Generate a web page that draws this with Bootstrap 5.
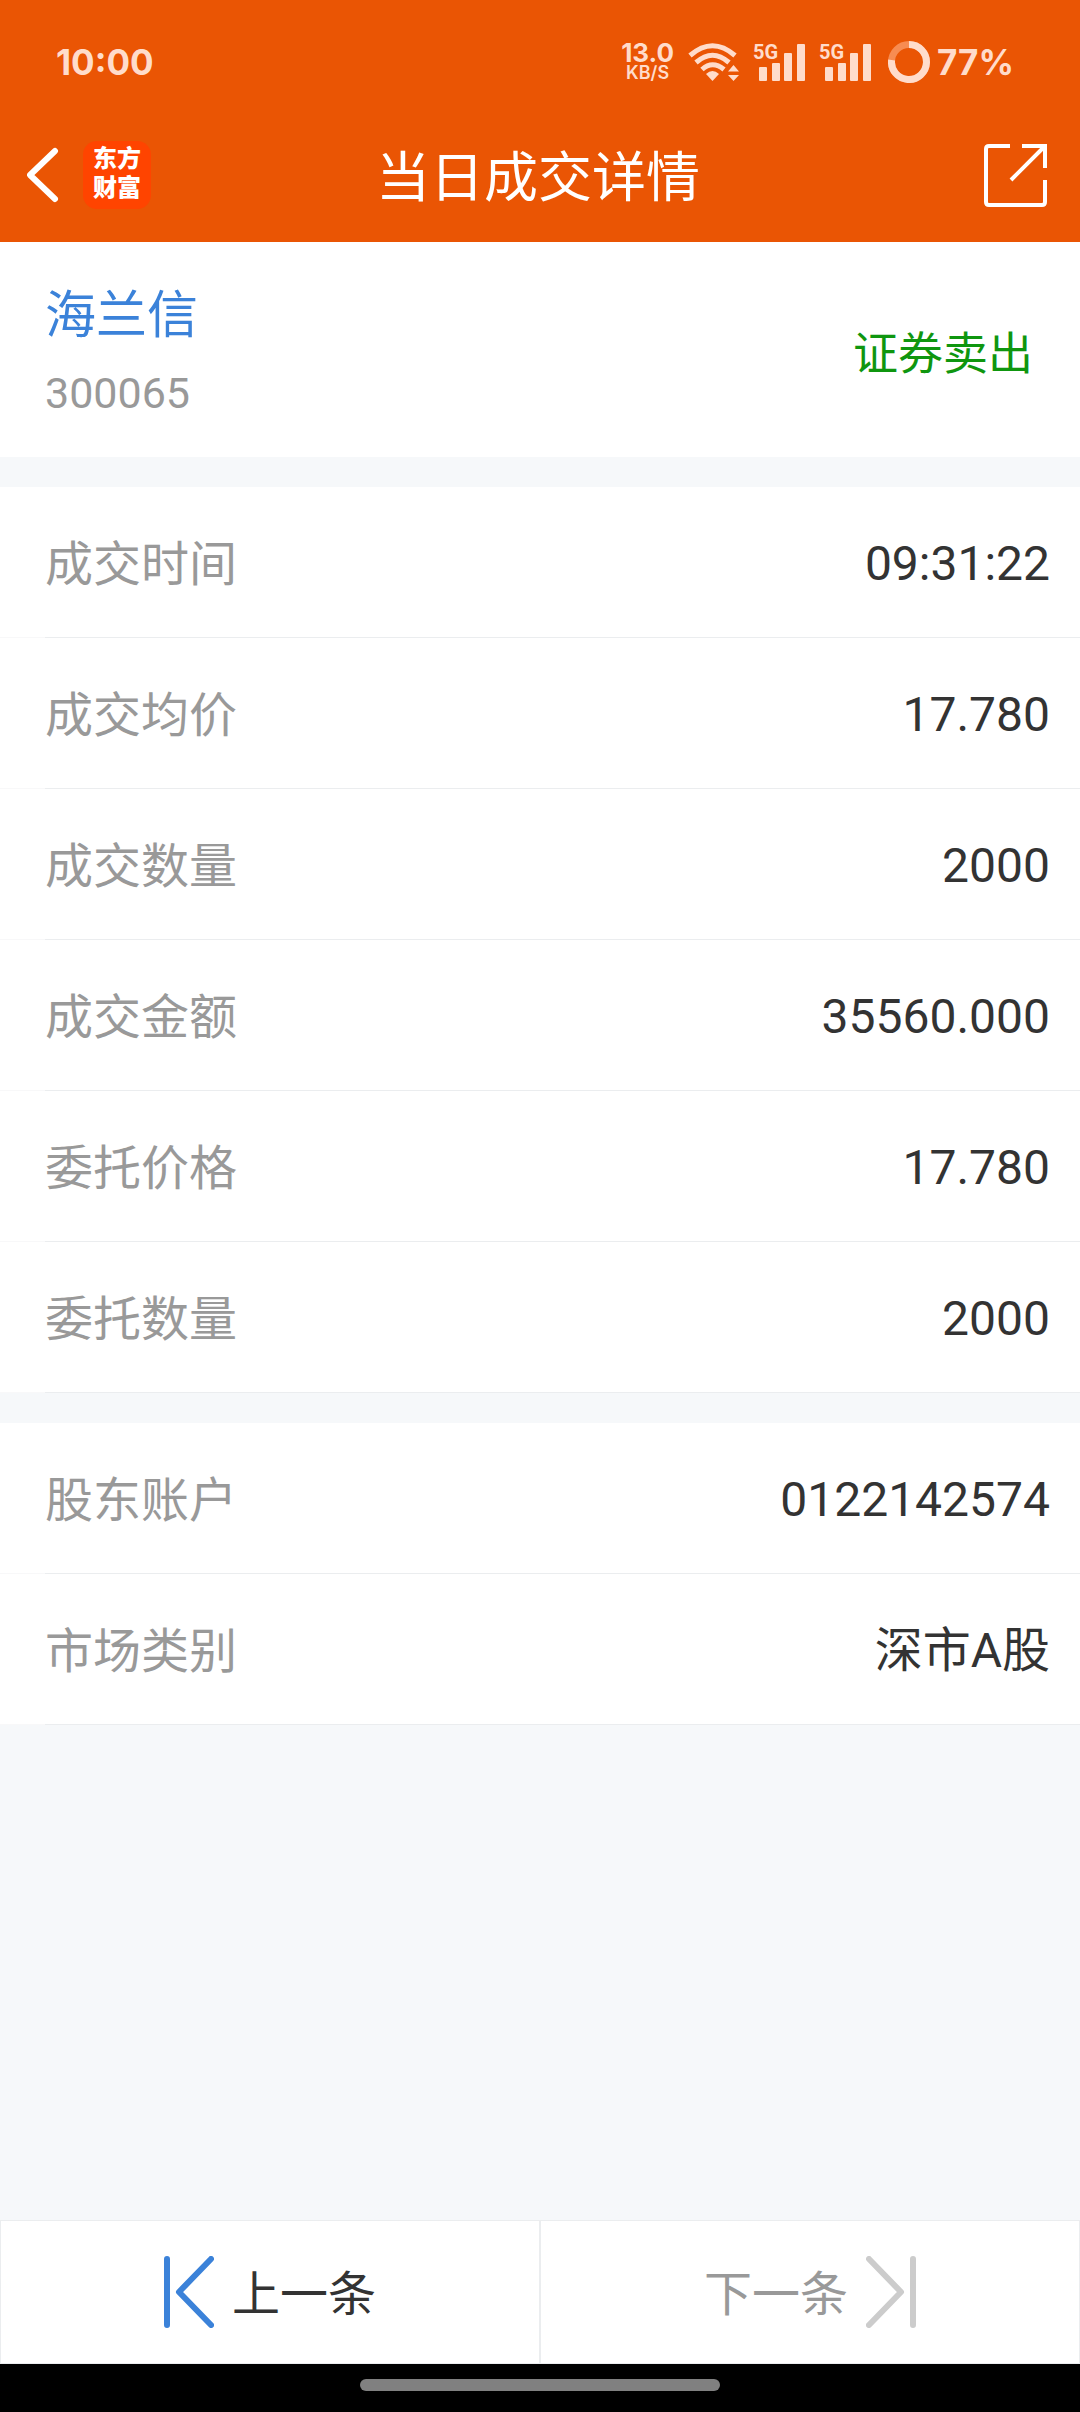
<!DOCTYPE html>
<html lang="zh-CN">
<head>
<meta charset="utf-8">
<meta name="viewport" content="width=device-width, initial-scale=1">
<title>当日成交详情</title>
<link href="https://cdn.jsdelivr.net/npm/bootstrap@5.3.0/dist/css/bootstrap.min.css" rel="stylesheet">
<style>
  body { background: #f6f8fa; color: #333; font-family: Roboto, "Noto Sans CJK SC", sans-serif; font-size: 48px; line-height: 72px; }
  svg { display: block; flex: none; }
  .top-area { background: #ea5504; color: #fff; }
  .status-bar { height: 124px; padding: 0 66px 0 56px; color: #ffdccb; font-family: Inter, sans-serif; font-weight: 700; font-size: 35px; line-height: 40px; }
  .net-speed { font-size: 26px; line-height: 22px; margin-right: 14px; }
  .net-unit { font-size: 18px; line-height: 18px; font-weight: 600; }
  .wifi { margin-right: 14px; }
  .signal { position: relative; width: 53px; height: 38px; margin-right: 13px; }
  .signal-name { position: absolute; left: 0; top: 0; font-size: 20px; line-height: 18px; font-family: Roboto, sans-serif; }
  .battery { margin: 0 7px 0 3px; }
  .title-bar { display: grid; grid-template-columns: 1fr auto 1fr; height: 118px; padding: 0 33px 16px 27px; }
  .title-bar h1 { font-size: 54px; line-height: 72px; padding: 8px 0 0 2px; }
  .app-logo { width: 68px; height: 68px; border-radius: 14px; background: #ff4400; color: #fff; font-size: 24px; line-height: 29px; font-weight: 900; margin-left: 24px; padding-bottom: 2px; }
  .stock-head { padding: 40px 47px 30px 45px; height: 215px; }
  .stock-name { color: #3b82d9; font-size: 51px; line-height: 76px; }
  .stock-code { color: #999; font-size: 43px; line-height: 78px; }
  .trade-side { color: #0f960f; font-size: 45px; line-height: 68px; }
  .detail-line { height: 151px; padding: 0 30px 0 45px; background: linear-gradient(#ebedef, #ebedef) 45px 100% / 100% 1px no-repeat, linear-gradient(#f8f8f9, #f8f8f9) 0 100% / 100% 1px no-repeat #fff; }
  .detail-line dt { color: #999; padding-top: 5px; }
  .detail-line dd { padding-top: 3px; }
  .section-gap { margin-top: 30px; }
  .pager-btn { height: 144px; gap: 18px; background: #fff; border: 1px solid #ebedef; color: #333; font-size: 48px; line-height: 72px; }
  .pager-btn span { padding-top: 6px; }
  .pager-btn:disabled { color: #999; }
  .home-strip { background: #000; height: 48px; padding-top: 15px; }
  .home-pill { width: 33.333%; height: 12px; background: #808080; }
</style>
</head>
<body class="d-flex flex-column min-vh-100">
<header class="top-area">
  <div class="status-bar d-flex align-items-center">
    <span class="me-auto">10:00</span>
    <div class="net-speed text-center">13.0<div class="net-unit">KB/S</div></div>
    <svg class="wifi" width="51" height="38" viewBox="0 0 51 38" fill="none" stroke="#ffdccb" stroke-width="5">
      <path d="M2 12.500Q24.500 -7 47 12.500M8 19.500Q24.500 5 41 19.500M14 26.500Q24.500 17 36 26.500"/>
      <path d="M18 31Q24.500 25 31 31L24.500 38Z" fill="#ffdccb" stroke="none"/>
      <path d="M40 28.500L45.500 22L51 28.500ZM40 32L45.500 38L51 32Z" fill="#ffdccb" stroke="none"/>
    </svg>
    <div class="signal"><span class="signal-name">5G</span>
      <svg width="53" height="38" viewBox="0 0 53 38" fill="#ffdccb"><rect x="6" y="24" width="8" height="14" rx="1"/><rect x="19" y="20" width="8" height="18" rx="1"/><rect x="31" y="10" width="8" height="28" rx="1"/><rect x="44" y="1" width="8" height="37" rx="1"/></svg>
    </div>
    <div class="signal"><span class="signal-name">5G</span>
      <svg width="53" height="38" viewBox="0 0 53 38" fill="#ffdccb"><rect x="6" y="24" width="8" height="14" rx="1"/><rect x="19" y="20" width="8" height="18" rx="1"/><rect x="31" y="10" width="8" height="28" rx="1"/><rect x="44" y="1" width="8" height="37" rx="1"/></svg>
    </div>
    <svg class="battery" width="42" height="42" viewBox="0 0 42 42" fill="none" stroke-width="7"><circle cx="21" cy="21" r="17.500" stroke="#f78c52"/><path d="M21 3.500A17.500 17.500 0 1 1 3.600 19" stroke="#ffdccb"/></svg>
    <span>77%</span>
  </div>
  <div class="title-bar align-items-center">
    <div class="d-flex align-items-center">
      <a href="#" aria-label="返回"><svg width="32" height="56" viewBox="0 0 32 56" fill="none" stroke="#fff" stroke-width="6" stroke-linecap="round" stroke-linejoin="round"><path d="M28 4L3 28L28 52"/></svg></a>
      <div class="app-logo d-flex flex-column justify-content-center text-center"><span>东方</span><span>财富</span></div>
    </div>
    <h1 class="m-0 fw-normal">当日成交详情</h1>
    <a href="#" class="ms-auto" aria-label="分享"><svg width="63" height="63" viewBox="0 0 63 63" fill="none" stroke="#fff" stroke-width="4"><path d="M26 2H5Q2 2 2 5V58Q2 61 5 61H58Q61 61 61 58V36M38 2H61V24M61 2L27 36"/></svg></a>
  </div>
</header>
<main class="flex-grow-1">
  <section class="stock-head bg-white d-flex justify-content-between align-items-center">
    <div><div class="stock-name">海兰信</div><div class="stock-code">300065</div></div>
    <div class="trade-side">证券卖出</div>
  </section>
  <dl class="section-gap mb-0">
    <div class="detail-line d-flex justify-content-between align-items-center"><dt class="fw-normal">成交时间</dt><dd class="m-0">09:31:22</dd></div>
    <div class="detail-line d-flex justify-content-between align-items-center"><dt class="fw-normal">成交均价</dt><dd class="m-0">17.780</dd></div>
    <div class="detail-line d-flex justify-content-between align-items-center"><dt class="fw-normal">成交数量</dt><dd class="m-0">2000</dd></div>
    <div class="detail-line d-flex justify-content-between align-items-center"><dt class="fw-normal">成交金额</dt><dd class="m-0">35560.000</dd></div>
    <div class="detail-line d-flex justify-content-between align-items-center"><dt class="fw-normal">委托价格</dt><dd class="m-0">17.780</dd></div>
    <div class="detail-line d-flex justify-content-between align-items-center"><dt class="fw-normal">委托数量</dt><dd class="m-0">2000</dd></div>
  </dl>
  <dl class="section-gap mb-0">
    <div class="detail-line d-flex justify-content-between align-items-center"><dt class="fw-normal">股东账户</dt><dd class="m-0">0122142574</dd></div>
    <div class="detail-line d-flex justify-content-between align-items-center"><dt class="fw-normal">市场类别</dt><dd class="m-0">深市A股</dd></div>
  </dl>
</main>
<footer>
  <div class="d-flex">
    <button type="button" class="pager-btn d-flex flex-fill w-50 p-0 align-items-center justify-content-center"><svg width="50" height="72" viewBox="0 0 50 72" fill="none" stroke="#3b82d9" stroke-width="6" stroke-linecap="round" stroke-linejoin="round"><path d="M3 3V69M47 3L15 36L47 69"/></svg><span>上一条</span></button>
    <button type="button" disabled class="pager-btn d-flex flex-fill w-50 p-0 align-items-center justify-content-center"><span>下一条</span><svg width="50" height="72" viewBox="0 0 50 72" fill="none" stroke="#ccc" stroke-width="6" stroke-linecap="round" stroke-linejoin="round"><path d="M47 3V69M3 3L35 36L3 69"/></svg></button>
  </div>
  <div class="home-strip"><div class="home-pill rounded-pill mx-auto"></div></div>
</footer>
<script src="https://cdn.jsdelivr.net/npm/bootstrap@5.3.0/dist/js/bootstrap.bundle.min.js"></script>
</body>
</html>
